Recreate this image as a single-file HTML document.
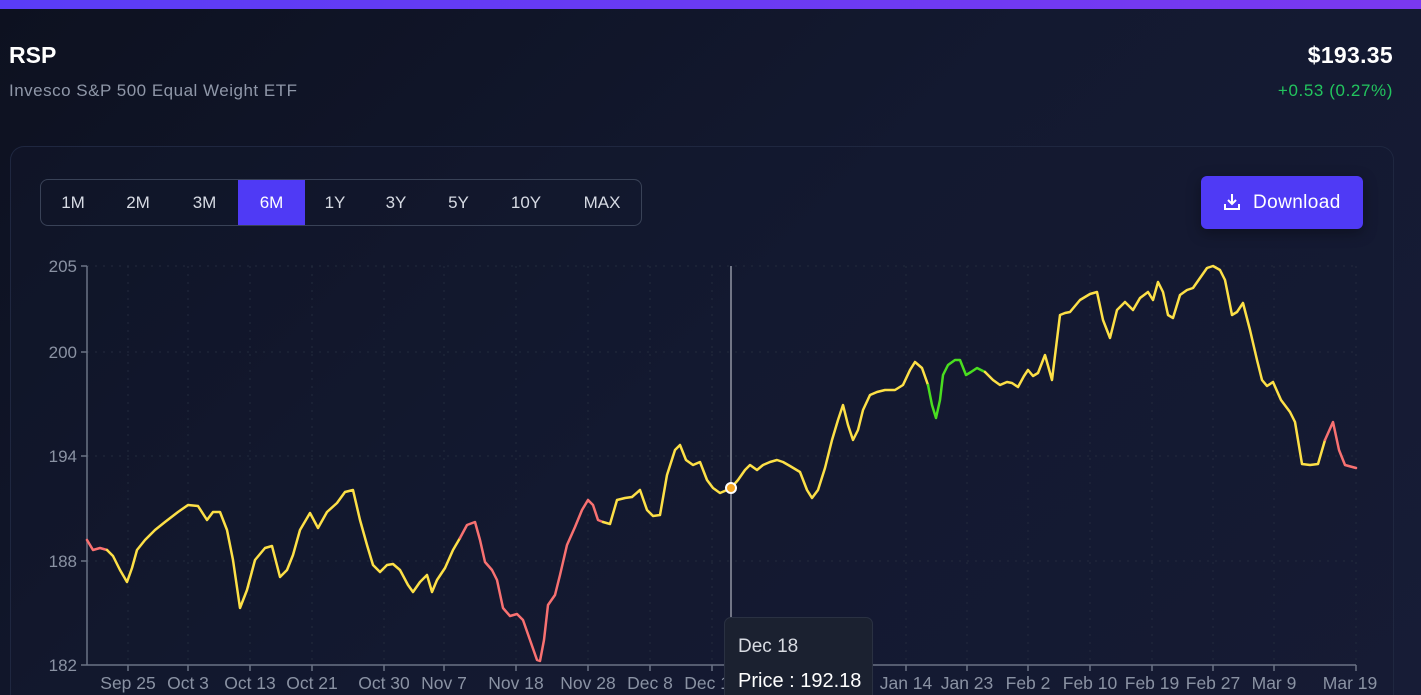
<!DOCTYPE html>
<html style="width:1421px;height:695px;overflow:hidden"><head><meta charset="utf-8"><style>
*{margin:0;padding:0;box-sizing:border-box}
body{width:1421px;height:695px;overflow:hidden;background:linear-gradient(135deg,#0d1120 0%,#131930 50%,#171c36 100%);font-family:"Liberation Sans",sans-serif;color:#fff;position:relative}
.bar{position:absolute;left:0;top:0;width:1421px;height:9px;background:linear-gradient(90deg,#5a3cf6,#7a38f0)}
.t{position:absolute;white-space:nowrap}
.card{position:absolute;left:10px;top:146px;width:1384px;height:549px;border:1px solid #1f2740;border-bottom:none;border-radius:14px 14px 0 0;background:rgba(20,26,50,0.35)}
.seg{position:absolute;left:40px;top:179px;width:602px;height:47px;border:1px solid #394257;border-radius:8px;overflow:hidden}
.seg span{position:absolute;top:0;height:45px;line-height:45px;font-size:17px;color:#d6dae3;text-align:center}
.btn{position:absolute;left:1201px;top:176px;width:162px;height:53px;background:#4f3af5;border-radius:6px;font-size:19px;line-height:53px;color:#fff;box-shadow:0 4px 14px rgba(0,0,0,.35)}
.tip{position:absolute;left:724px;top:617px;width:149px;height:78px;background:#1b2130;border:1px solid #2a3142;border-bottom:none;border-radius:7px 7px 0 0;overflow:hidden}
</style></head><body>
<div class="bar"></div>
<div class="t" style="left:9px;top:42px;font-size:23px;font-weight:bold">RSP</div>
<div class="t" style="left:9px;top:81px;font-size:17px;color:#8f97a8;letter-spacing:0.5px">Invesco S&amp;P 500 Equal Weight ETF</div>
<div class="t" style="right:28px;top:42px;font-size:23px;font-weight:bold;letter-spacing:0.3px">$193.35</div>
<div class="t" style="right:28px;top:81px;font-size:17px;color:#22c55e;letter-spacing:0.6px">+0.53 (0.27%)</div>
<div class="card"></div>
<div class="seg">
<span style="left:0;width:64px">1M</span><span style="left:64px;width:66px">2M</span><span style="left:130px;width:67px">3M</span>
<span style="left:197px;width:67px;background:#4f3af5;color:#fff">6M</span>
<span style="left:264px;width:60px">1Y</span><span style="left:324px;width:62px">3Y</span><span style="left:386px;width:63px">5Y</span><span style="left:449px;width:72px">10Y</span><span style="left:521px;width:80px">MAX</span>
</div>
<div class="btn"><svg style="position:absolute;left:22px;top:17px" width="18" height="18" viewBox="0 0 18 18" fill="none" stroke="#fff" stroke-width="2"><path d="M9 1v10M5 7l4 4 4-4M2 11v5h14v-5"/></svg><span style="position:absolute;left:52px;letter-spacing:0.4px">Download</span></div>
<svg class="t" style="left:0;top:0" width="1421" height="695">
<g stroke="#232b3d" stroke-dasharray="2 6" stroke-width="1">
<line x1="87" y1="266" x2="1356" y2="266"/><line x1="87" y1="352" x2="1356" y2="352"/><line x1="87" y1="456" x2="1356" y2="456"/><line x1="87" y1="561" x2="1356" y2="561"/>
<line x1="128" y1="266" x2="128" y2="665"/><line x1="188" y1="266" x2="188" y2="665"/><line x1="250" y1="266" x2="250" y2="665"/><line x1="312" y1="266" x2="312" y2="665"/><line x1="384" y1="266" x2="384" y2="665"/><line x1="444" y1="266" x2="444" y2="665"/><line x1="516" y1="266" x2="516" y2="665"/><line x1="588" y1="266" x2="588" y2="665"/><line x1="650" y1="266" x2="650" y2="665"/><line x1="712" y1="266" x2="712" y2="665"/><line x1="906" y1="266" x2="906" y2="665"/><line x1="967" y1="266" x2="967" y2="665"/><line x1="1028" y1="266" x2="1028" y2="665"/><line x1="1090" y1="266" x2="1090" y2="665"/><line x1="1152" y1="266" x2="1152" y2="665"/><line x1="1213" y1="266" x2="1213" y2="665"/><line x1="1274" y1="266" x2="1274" y2="665"/><line x1="1356" y1="266" x2="1356" y2="665"/>
</g>
<g stroke="#6b7385" stroke-width="1.5"><line x1="87" y1="266" x2="87" y2="665"/><line x1="87" y1="665" x2="1356" y2="665"/>
<line x1="81" y1="266" x2="87" y2="266"/><line x1="81" y1="352" x2="87" y2="352"/><line x1="81" y1="456" x2="87" y2="456"/><line x1="81" y1="561" x2="87" y2="561"/><line x1="81" y1="665" x2="87" y2="665"/>
<line x1="128" y1="665" x2="128" y2="671"/><line x1="188" y1="665" x2="188" y2="671"/><line x1="250" y1="665" x2="250" y2="671"/><line x1="312" y1="665" x2="312" y2="671"/><line x1="384" y1="665" x2="384" y2="671"/><line x1="444" y1="665" x2="444" y2="671"/><line x1="516" y1="665" x2="516" y2="671"/><line x1="588" y1="665" x2="588" y2="671"/><line x1="650" y1="665" x2="650" y2="671"/><line x1="712" y1="665" x2="712" y2="671"/><line x1="906" y1="665" x2="906" y2="671"/><line x1="967" y1="665" x2="967" y2="671"/><line x1="1028" y1="665" x2="1028" y2="671"/><line x1="1090" y1="665" x2="1090" y2="671"/><line x1="1152" y1="665" x2="1152" y2="671"/><line x1="1213" y1="665" x2="1213" y2="671"/><line x1="1274" y1="665" x2="1274" y2="671"/><line x1="1356" y1="665" x2="1356" y2="671"/></g>
<g fill="#8a92a3" font-size="17" font-family="Liberation Sans" text-anchor="end">
<text x="77" y="272">205</text><text x="77" y="358">200</text><text x="77" y="462">194</text><text x="77" y="567">188</text><text x="77" y="671">182</text></g>
<g fill="#8a92a3" font-size="17.5" font-family="Liberation Sans" text-anchor="middle">
<text x="128" y="689">Sep 25</text><text x="188" y="689">Oct 3</text><text x="250" y="689">Oct 13</text><text x="312" y="689">Oct 21</text><text x="384" y="689">Oct 30</text><text x="444" y="689">Nov 7</text><text x="516" y="689">Nov 18</text><text x="588" y="689">Nov 28</text><text x="650" y="689">Dec 8</text><text x="712" y="689">Dec 18</text><text x="906" y="689">Jan 14</text><text x="967" y="689">Jan 23</text><text x="1028" y="689">Feb 2</text><text x="1090" y="689">Feb 10</text><text x="1152" y="689">Feb 19</text><text x="1213" y="689">Feb 27</text><text x="1274" y="689">Mar 9</text><text x="1350" y="689">Mar 19</text></g>
<line x1="731" y1="266" x2="731" y2="665" stroke="#d0d4dc" stroke-width="1"/>
<g fill="none" stroke-width="2.5" stroke-linejoin="round" stroke-linecap="round">
<polyline stroke="#f87171" points="87,540 93,550 100,548 107,550"/>
<polyline stroke="#fde047" points="107,550 113,556 120,570 127,582 132,568 137,550 145,540 155,530 165,522 178,512 188,505 198,506 207,520 213,512 220,512 227,530 233,560 240,608 247,590 255,560 265,548 272,546 280,577 287,570 293,555 300,530 310,513 318,528 327,512 337,503 345,492 353,490 360,520 367,545 373,565 380,572 387,565 393,564 400,570 408,585 413,592 420,582 427,575 432,592 437,580 445,568 453,550 460,538"/>
<polyline stroke="#f87171" points="460,538 467,525 475,522 480,540 485,562 492,570 497,580 503,608 510,616 517,614 523,620 530,640 537,660 540,661 544,640 548,605 555,595 560,575 567,545 575,527 582,510 588,500 593,505 598,520 603,522"/>
<polyline stroke="#fde047" points="603,522 610,524 617,500 625,498 632,497 640,490 647,510 653,516 660,515 667,475 675,450 680,445 686,460 693,465 700,462 707,480 713,488 720,493 727,490 731,488 738,480 745,470 750,465 757,470 763,465 770,462 777,460 783,462 790,466 800,472 807,490 812,498 818,490 825,468 832,440 838,420 843,405 848,425 853,440 858,430 863,410 870,395 877,392 885,390 895,390 903,385 910,370 915,362 922,368 928,385"/>
<polyline stroke="#4ade20" points="928,385 932,405 936,418 940,400 943,375 948,365 955,360 960,360 966,375 971,372 977,368 985,372"/>
<polyline stroke="#fde047" points="985,372 993,380 1000,385 1007,382 1012,383 1018,387 1024,376 1028,370 1033,376 1038,373 1045,355 1052,380 1060,315 1065,313 1070,312 1080,300 1090,294 1097,292 1103,320 1110,338 1117,310 1125,302 1133,310 1140,298 1148,292 1153,300 1158,282 1163,292 1168,315 1173,318 1180,295 1187,290 1193,288 1200,278 1207,268 1213,266 1220,270 1225,280 1232,315 1237,312 1243,303 1250,330 1257,360 1262,380 1267,386 1273,382 1281,400 1290,412 1295,422 1302,464 1310,465 1318,464 1325,440"/>
<polyline stroke="#f87171" points="1325,440 1333,422 1339,450 1345,465 1356,468"/>
</g>
<circle cx="731" cy="488" r="5" fill="#f5a623" stroke="#fff" stroke-width="2"/>
</svg>
<div class="tip">
<div class="t" style="left:13px;top:18px;font-size:19px;color:#d8dbe2">Dec 18</div>
<div class="t" style="left:13px;top:52px;font-size:20px;color:#fff">Price : 192.18</div>
</div>
</body></html>
